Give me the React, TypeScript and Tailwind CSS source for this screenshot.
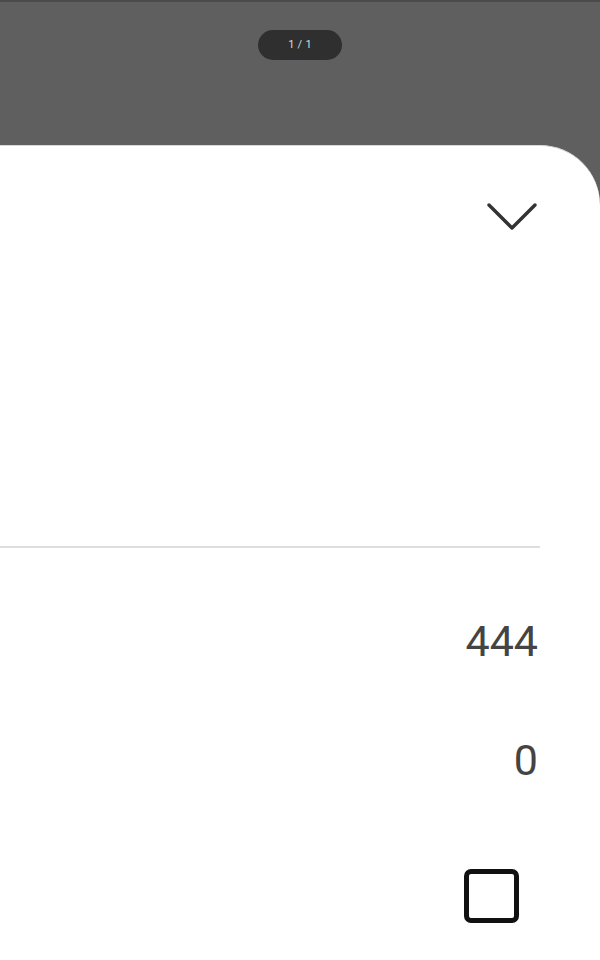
import { ReactNode } from 'react';

function Row({ children, className = '' }: { children: ReactNode; className?: string }) {
  return <div className={`flex justify-end pr-[62px] ${className}`}>{children}</div>;
}

export default function App() {
  return (
    <div
      className="w-[600px] h-[960px] overflow-hidden bg-[#5f5f5f] flex flex-col"
      style={{ fontFamily: 'Roboto, "Liberation Sans", sans-serif' }}
    >
      {/* Page counter over the dimmed viewer */}
      <div className="h-[145px] shrink-0 border-t-2 border-[#4b4b4b] flex justify-center pt-[28px]">
        <div className="h-[30px] w-[84px] rounded-full bg-[#2f2f2f] flex items-center justify-center text-[11px] text-[#d8d8d8] tracking-wide">
          1 / 1
        </div>
      </div>

      {/* Bottom sheet */}
      <div className="flex-1 bg-white rounded-tr-[60px] border-t border-[#d9d9d9] flex flex-col">
        <Row className="pt-[55px]">
          <svg width="52" height="32" viewBox="0 0 52 32">
            <path d="M3 4 L26 27 L49 4" fill="none" stroke="#333" strokeWidth="3.4" strokeLinecap="round" strokeLinejoin="round" />
          </svg>
        </Row>

        <div className="mt-[313px] mr-[60px] h-[2px] bg-[#dedede]" />

        <Row className="mt-[72px]">
          <span className="text-[43px] leading-none text-[#444]">444</span>
        </Row>
        <Row className="mt-[76px]">
          <span className="text-[43px] leading-none text-[#444]">0</span>
        </Row>
        <Row className="mt-[87px] pr-[81px]">
          <div className="w-[55px] h-[54px] rounded-[7px] border-[5px] border-[#111]" />
        </Row>
      </div>
    </div>
  );
}
